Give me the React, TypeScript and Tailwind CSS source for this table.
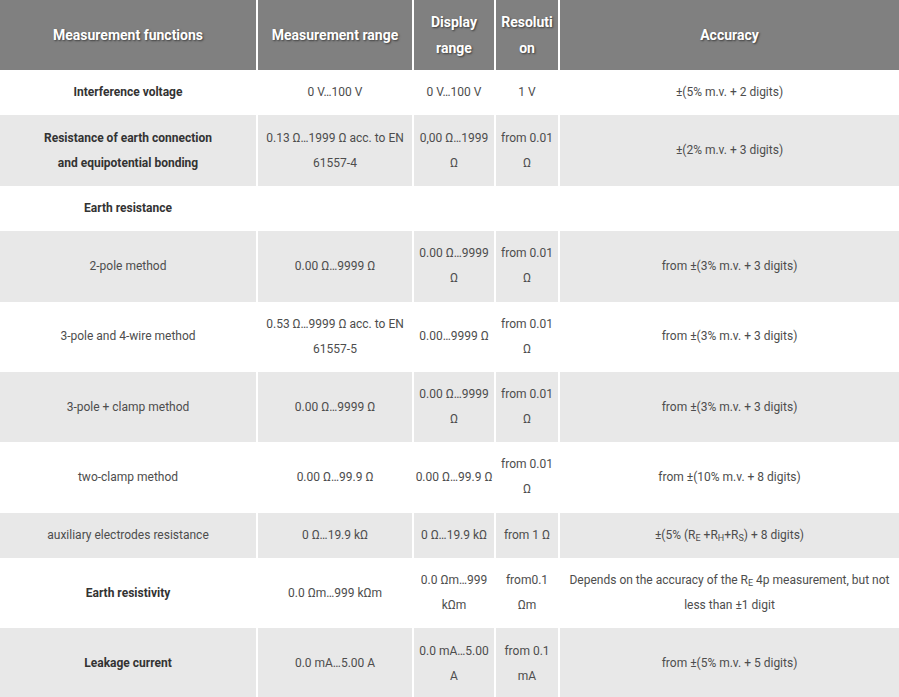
import React from "react";

type Row = {
  c1: React.ReactNode;
  bold?: boolean;
  c2?: React.ReactNode;
  c3?: React.ReactNode;
  c4?: React.ReactNode;
  c5?: React.ReactNode;
};

const rows: Row[] = [
  { c1: "Interference voltage", bold: true, c2: "0 V…100 V", c3: "0 V…100 V", c4: "1 V", c5: "±(5% m.v. + 2 digits)" },
  {
    c1: (
      <>
        Resistance of earth connection
        <br />
        and equipotential bonding
      </>
    ),
    bold: true,
    c2: "0.13 Ω…1999 Ω acc. to EN 61557-4",
    c3: "0,00 Ω…1999 Ω",
    c4: "from 0.01 Ω",
    c5: "±(2% m.v. + 3 digits)",
  },
  { c1: "Earth resistance", bold: true },
  { c1: "2-pole method", c2: "0.00 Ω…9999 Ω", c3: "0.00 Ω…9999 Ω", c4: "from 0.01 Ω", c5: "from ±(3% m.v. + 3 digits)" },
  { c1: "3-pole and 4-wire method", c2: "0.53 Ω…9999 Ω acc. to EN 61557-5", c3: "0.00…9999 Ω", c4: "from 0.01 Ω", c5: "from ±(3% m.v. + 3 digits)" },
  { c1: "3-pole + clamp method", c2: "0.00 Ω…9999 Ω", c3: "0.00 Ω…9999 Ω", c4: "from 0.01 Ω", c5: "from ±(3% m.v. + 3 digits)" },
  { c1: "two-clamp method", c2: "0.00 Ω…99.9 Ω", c3: "0.00 Ω…99.9 Ω", c4: "from 0.01 Ω", c5: "from ±(10% m.v. + 8 digits)" },
  {
    c1: "auxiliary electrodes resistance",
    c2: "0 Ω…19.9 kΩ",
    c3: "0 Ω…19.9 kΩ",
    c4: "from 1 Ω",
    c5: (
      <>
        ±(5% (R<sub className="text-[9px]">E</sub> +R<sub className="text-[9px]">H</sub>+R<sub className="text-[9px]">S</sub>) + 8 digits)
      </>
    ),
  },
  {
    c1: "Earth resistivity",
    bold: true,
    c2: "0.0 Ωm…999 kΩm",
    c3: "0.0 Ωm…999 kΩm",
    c4: "from0.1 Ωm",
    c5: (
      <>
        Depends on the accuracy of the R<sub className="text-[9px]">E</sub> 4p measurement, but not less than ±1 digit
      </>
    ),
  },
  { c1: "Leakage current", bold: true, c2: "0.0 mA…5.00 A", c3: "0.0 mA…5.00 A", c4: "from 0.1 mA", c5: "from ±(5% m.v. + 5 digits)" },
];

const gridCols = "grid grid-cols-[256px_154px_80px_62px_339px] gap-x-[2px]";

function HeadCell({ children }: { children: React.ReactNode }) {
  return (
    <div className="flex items-center justify-center bg-[#808080] px-[4px] py-[9px] text-center text-[14px] font-bold leading-[26px] text-white [overflow-wrap:anywhere] [text-shadow:1px_1px_2px_rgba(0,0,0,0.55)]">
      <span>{children}</span>
    </div>
  );
}

function Cell({ children, bg, bold, pad = "px-[1px]" }: { children?: React.ReactNode; bg: string; bold?: boolean; pad?: string }) {
  return (
    <div
      className={`flex items-center justify-center ${pad} py-[10.2px] text-center text-[12px] leading-[25px] ${bg} ${
        bold ? "font-bold text-[#333333]" : "text-[#4d4d4d]"
      }`}
    >
      <span>{children}</span>
    </div>
  );
}

export default function App() {
  return (
    <div className="w-[899px] bg-white" style={{ fontFamily: "Roboto, 'Noto Sans', Arial, sans-serif" }}>
      <div className={gridCols}>
        <HeadCell>Measurement functions</HeadCell>
        <HeadCell>Measurement range</HeadCell>
        <HeadCell>Display range</HeadCell>
        <HeadCell>Resolution</HeadCell>
        <HeadCell>Accuracy</HeadCell>
      </div>
      {rows.map((r, i) => {
        const bg = i % 2 === 1 ? "bg-[#e8e8e8]" : "bg-white";
        return (
          <div key={i} className={gridCols}>
            <Cell bg={bg} bold={r.bold} pad="px-[8px]">
              {r.c1}
            </Cell>
            <Cell bg={bg}>{r.c2}</Cell>
            <Cell bg={bg}>{r.c3}</Cell>
            <Cell bg={bg}>{r.c4}</Cell>
            <Cell bg={bg} pad="px-[8px]">
              {r.c5}
            </Cell>
          </div>
        );
      })}
    </div>
  );
}
